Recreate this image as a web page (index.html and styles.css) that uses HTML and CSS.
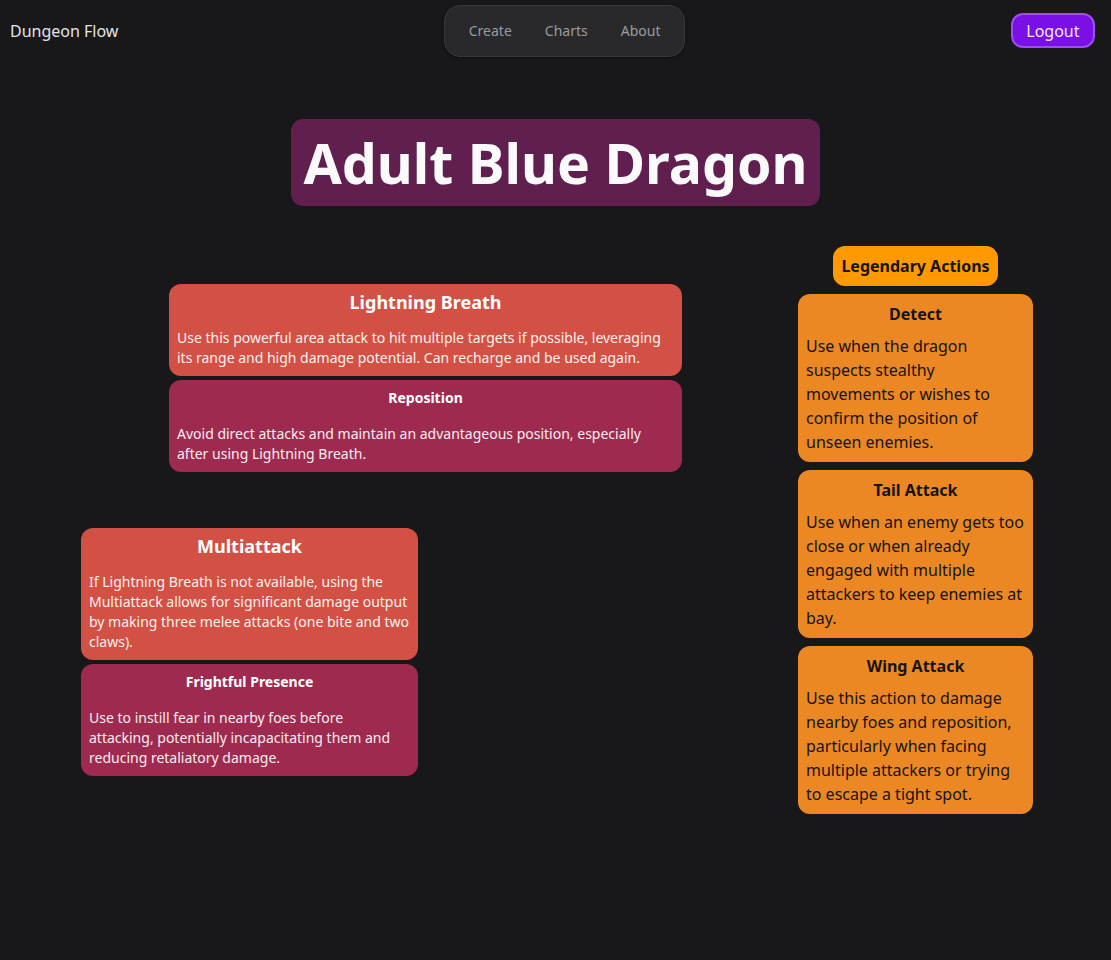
FILE: index.html
```html
<!DOCTYPE html>
<html lang="en">
<head>
<meta charset="utf-8">
<title>Dungeon Flow</title>
<link rel="stylesheet" href="styles.css">
</head>
<body>
<header class="topbar">
  <a class="brand">Dungeon Flow</a>
  <nav class="nav-pill">
    <a class="nav-item">Create</a>
    <a class="nav-item">Charts</a>
    <a class="nav-item">About</a>
  </nav>
  <button class="logout">Logout</button>
</header>
<main class="page">
  <h1 class="title">Adult Blue Dragon</h1>
  <section class="canvas">
    <div class="node group-a">
      <div class="card red">
        <h2 class="card-title lg">Lightning Breath</h2>
        <p class="card-text">Use this powerful area attack to hit multiple targets if possible, leveraging its range and high damage potential. Can recharge and be used again.</p>
      </div>
      <div class="card maroon">
        <h3 class="card-title sm">Reposition</h3>
        <p class="card-text">Avoid direct attacks and maintain an advantageous position, especially after using Lightning Breath.</p>
      </div>
    </div>
    <div class="node group-b">
      <div class="card red">
        <h2 class="card-title lg">Multiattack</h2>
        <p class="card-text">If Lightning Breath is not available, using the Multiattack allows for significant damage output by making three melee attacks (one bite and two claws).</p>
      </div>
      <div class="card maroon">
        <h3 class="card-title sm">Frightful Presence</h3>
        <p class="card-text">Use to instill fear in nearby foes before attacking, potentially incapacitating them and reducing retaliatory damage.</p>
      </div>
    </div>
    <div class="node group-c">
      <div class="legend-pill">Legendary Actions</div>
      <div class="card orange">
        <h3 class="card-title md">Detect</h3>
        <p class="card-text big">Use when the dragon suspects stealthy movements or wishes to confirm the position of unseen enemies.</p>
      </div>
      <div class="card orange">
        <h3 class="card-title md">Tail Attack</h3>
        <p class="card-text big">Use when an enemy gets too close or when already engaged with multiple attackers to keep enemies at bay.</p>
      </div>
      <div class="card orange">
        <h3 class="card-title md">Wing Attack</h3>
        <p class="card-text big">Use this action to damage nearby foes and reposition, particularly when facing multiple attackers or trying to escape a tight spot.</p>
      </div>
    </div>
  </section>
</main>
</body>
</html>
```

FILE: styles.css
```css
* { box-sizing: border-box; }
html, body {
  margin: 0;
  padding: 0;
  background: #18181b;
  font-family: "Noto Sans", "Open Sans", sans-serif;
  color: #e4e4e7;
  min-height: 960px;
}
.topbar {
  display: flex;
  align-items: center;
  justify-content: space-between;
  padding: 0 16px 0 10px;
  height: 61px;
}
.brand {
  font-size: 16px;
  line-height: 24px;
  color: #e4e4e7;
}
.nav-pill {
  display: flex;
  padding: 7px;
  background: #29292c;
  border: 1px solid #38383c;
  border-radius: 16px;
  box-shadow: 0 1px 3px rgba(0,0,0,0.4);
}
.nav-item {
  padding: 8px 16.5px;
  font-size: 14px;
  line-height: 20px;
  color: #9a9aa0;
}
.logout {
  font-family: inherit;
  font-size: 16px;
  line-height: 24px;
  padding: 3.5px 13.5px;
  color: #f1e8ff;
  background: #7a0fe6;
  border: 2px solid #9a4ef5;
  border-radius: 12px;
}
.page {
  position: relative;
}
.title {
  display: table;
  margin: 58px auto 0;
  padding: 12px 12px 12px;
  background: #611f4f;
  border-radius: 12px;
  font-size: 55.4px;
  line-height: 63px;
  font-weight: 700;
  color: #fafafa;
}
.canvas {
  position: relative;
  height: 754px;
}
.node {
  position: absolute;
  display: flex;
  flex-direction: column;
}
.group-a { left: 169px; top: 78px; width: 513px; gap: 4px; }
.group-b { left: 81px; top: 322px; width: 337px; gap: 4px; }
.group-c { left: 798px; top: 40px; width: 235px; gap: 8px; align-items: center; }
.card {
  width: 100%;
  padding: 8px;
  border-radius: 12px;
}
.red { background: #d35144; color: #fdf0ee; }
.maroon { background: #9e2b4f; color: #f9ecf0; }
.orange { background: #ec8823; color: #141414; }
.card-title {
  margin: 0;
  text-align: center;
  font-weight: 700;
}
.card-title.lg { font-size: 18px; line-height: 20px; margin-bottom: 16px; color: #fff; }
.card-title.sm { font-size: 14px; line-height: 20px; margin-bottom: 16px; color: #fff; }
.card-title.md { font-size: 16px; line-height: 24px; margin-bottom: 8px; }
.card-text {
  margin: 0;
  font-size: 14px;
  line-height: 20px;
}
.card-text.big {
  font-size: 16px;
  line-height: 24px;
}
.legend-pill {
  padding: 8px;
  background: #fe9a00;
  color: #141414;
  font-weight: 700;
  font-size: 16px;
  line-height: 24px;
  border-radius: 12px;
}
```
